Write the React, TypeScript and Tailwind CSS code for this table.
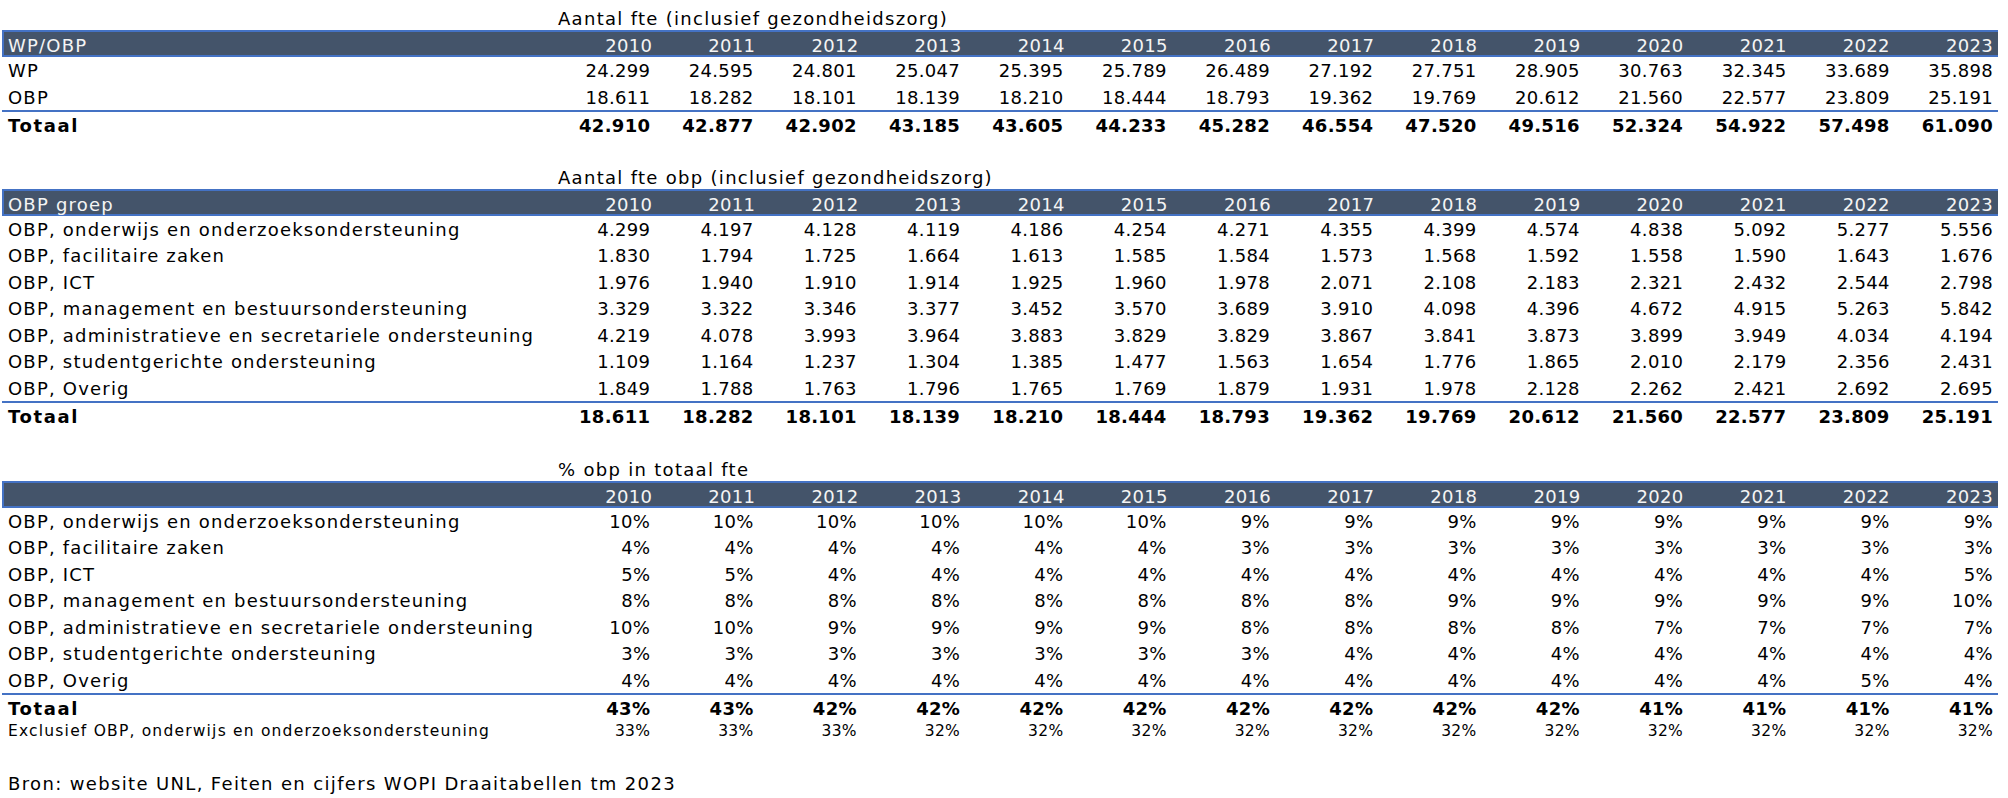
import React from 'react';

const YEARS = ['2010', '2011', '2012', '2013', '2014', '2015', '2016', '2017', '2018', '2019', '2020', '2021', '2022', '2023'];

interface Row {
  label: string;
  values: string[];
}

const sp = (s: string) => s.split(' ');

const table1: Row[] = [
  { label: 'WP', values: sp('24.299 24.595 24.801 25.047 25.395 25.789 26.489 27.192 27.751 28.905 30.763 32.345 33.689 35.898') },
  { label: 'OBP', values: sp('18.611 18.282 18.101 18.139 18.210 18.444 18.793 19.362 19.769 20.612 21.560 22.577 23.809 25.191') },
];
const total1 = sp('42.910 42.877 42.902 43.185 43.605 44.233 45.282 46.554 47.520 49.516 52.324 54.922 57.498 61.090');

const groups = [
  'OBP, onderwijs en onderzoeksondersteuning',
  'OBP, facilitaire zaken',
  'OBP, ICT',
  'OBP, management en bestuursondersteuning',
  'OBP, administratieve en secretariele ondersteuning',
  'OBP, studentgerichte ondersteuning',
  'OBP, Overig',
];

const fte2 = [
  '4.299 4.197 4.128 4.119 4.186 4.254 4.271 4.355 4.399 4.574 4.838 5.092 5.277 5.556',
  '1.830 1.794 1.725 1.664 1.613 1.585 1.584 1.573 1.568 1.592 1.558 1.590 1.643 1.676',
  '1.976 1.940 1.910 1.914 1.925 1.960 1.978 2.071 2.108 2.183 2.321 2.432 2.544 2.798',
  '3.329 3.322 3.346 3.377 3.452 3.570 3.689 3.910 4.098 4.396 4.672 4.915 5.263 5.842',
  '4.219 4.078 3.993 3.964 3.883 3.829 3.829 3.867 3.841 3.873 3.899 3.949 4.034 4.194',
  '1.109 1.164 1.237 1.304 1.385 1.477 1.563 1.654 1.776 1.865 2.010 2.179 2.356 2.431',
  '1.849 1.788 1.763 1.796 1.765 1.769 1.879 1.931 1.978 2.128 2.262 2.421 2.692 2.695',
];
const table2: Row[] = groups.map((g, i) => ({ label: g, values: sp(fte2[i]) }));
const total2 = sp('18.611 18.282 18.101 18.139 18.210 18.444 18.793 19.362 19.769 20.612 21.560 22.577 23.809 25.191');

const pct3 = [
  '10% 10% 10% 10% 10% 10% 9% 9% 9% 9% 9% 9% 9% 9%',
  '4% 4% 4% 4% 4% 4% 3% 3% 3% 3% 3% 3% 3% 3%',
  '5% 5% 4% 4% 4% 4% 4% 4% 4% 4% 4% 4% 4% 5%',
  '8% 8% 8% 8% 8% 8% 8% 8% 9% 9% 9% 9% 9% 10%',
  '10% 10% 9% 9% 9% 9% 8% 8% 8% 8% 7% 7% 7% 7%',
  '3% 3% 3% 3% 3% 3% 3% 4% 4% 4% 4% 4% 4% 4%',
  '4% 4% 4% 4% 4% 4% 4% 4% 4% 4% 4% 4% 5% 4%',
];
const table3: Row[] = groups.map((g, i) => ({ label: g, values: sp(pct3[i]) }));
const total3 = sp('43% 43% 42% 42% 42% 42% 42% 42% 42% 42% 41% 41% 41% 41%');
const excl3 = sp('33% 33% 33% 32% 32% 32% 32% 32% 32% 32% 32% 32% 32% 32%');

// label column + 14 year columns, same for all three tables
const grid = 'grid grid-cols-[550px_repeat(14,minmax(0,1fr))] items-center';
const num = 'text-right pr-[5px] whitespace-nowrap tracking-[0.3px]';

const Title: React.FC<{ text: string }> = ({ text }) => (
  <div className="h-[22px] leading-[22px] pl-[556px] whitespace-nowrap tracking-[1.3px]">{text}</div>
);

const Header: React.FC<{ label: string }> = ({ label }) => (
  <div className={`${grid} h-[27px] bg-[#44546a] border-y-2 border-l-2 border-[#4472c4] text-[#f4f4f4]`}>
    <div className="pl-[4px] whitespace-nowrap tracking-[1.2px]">{label}</div>
    {YEARS.map((y) => (
      <div key={y} className={num}>{y}</div>
    ))}
  </div>
);

const DataRow: React.FC<{ row: Row }> = ({ row }) => (
  <div className={`${grid} h-[26.5px]`}>
    <div className="pl-[6px] whitespace-nowrap tracking-[1.2px]">{row.label}</div>
    {row.values.map((v, i) => (
      <div key={i} className={num}>{v}</div>
    ))}
  </div>
);

const TotalRow: React.FC<{ values: string[] }> = ({ values }) => (
  <div className={`${grid} h-[26.5px] border-t-2 border-[#4472c4] font-bold`}>
    <div className="pl-[6px] tracking-[1.6px]">Totaal</div>
    {values.map((v, i) => (
      <div key={i} className={num}>{v}</div>
    ))}
  </div>
);

export default function App() {
  return (
    <div className="w-[2008px] h-[798px] bg-white text-black text-[18px] pt-[8px] font-['DejaVu_Sans',Verdana,sans-serif] overflow-hidden">
      <div className="w-[1996px] ml-[2px]">
        <Title text="Aantal fte (inclusief gezondheidszorg)" />
        <Header label="WP/OBP" />
        {table1.map((r) => (
          <DataRow key={r.label} row={r} />
        ))}
        <TotalRow values={total1} />

        <div className="mt-[30px]">
          <Title text="Aantal fte obp (inclusief gezondheidszorg)" />
          <Header label="OBP groep" />
          {table2.map((r) => (
            <DataRow key={r.label} row={r} />
          ))}
          <TotalRow values={total2} />
        </div>

        <div className="mt-[31px]">
          <Title text="% obp in totaal fte" />
          <Header label="" />
          {table3.map((r) => (
            <DataRow key={r.label} row={r} />
          ))}
          <TotalRow values={total3} />
          <div className={`${grid} h-[24px] text-[15.5px]`}>
            <div className="pl-[6px] whitespace-nowrap tracking-[1.2px]">Exclusief OBP, onderwijs en onderzoeksondersteuning</div>
            {excl3.map((v, i) => (
              <div key={i} className={num}>{v}</div>
            ))}
          </div>
        </div>

        <div className="mt-[29px] h-[22px] leading-[22px] pl-[6px] tracking-[1.35px]">
          Bron: website UNL, Feiten en cijfers WOPI Draaitabellen tm 2023
        </div>
      </div>
    </div>
  );
}
